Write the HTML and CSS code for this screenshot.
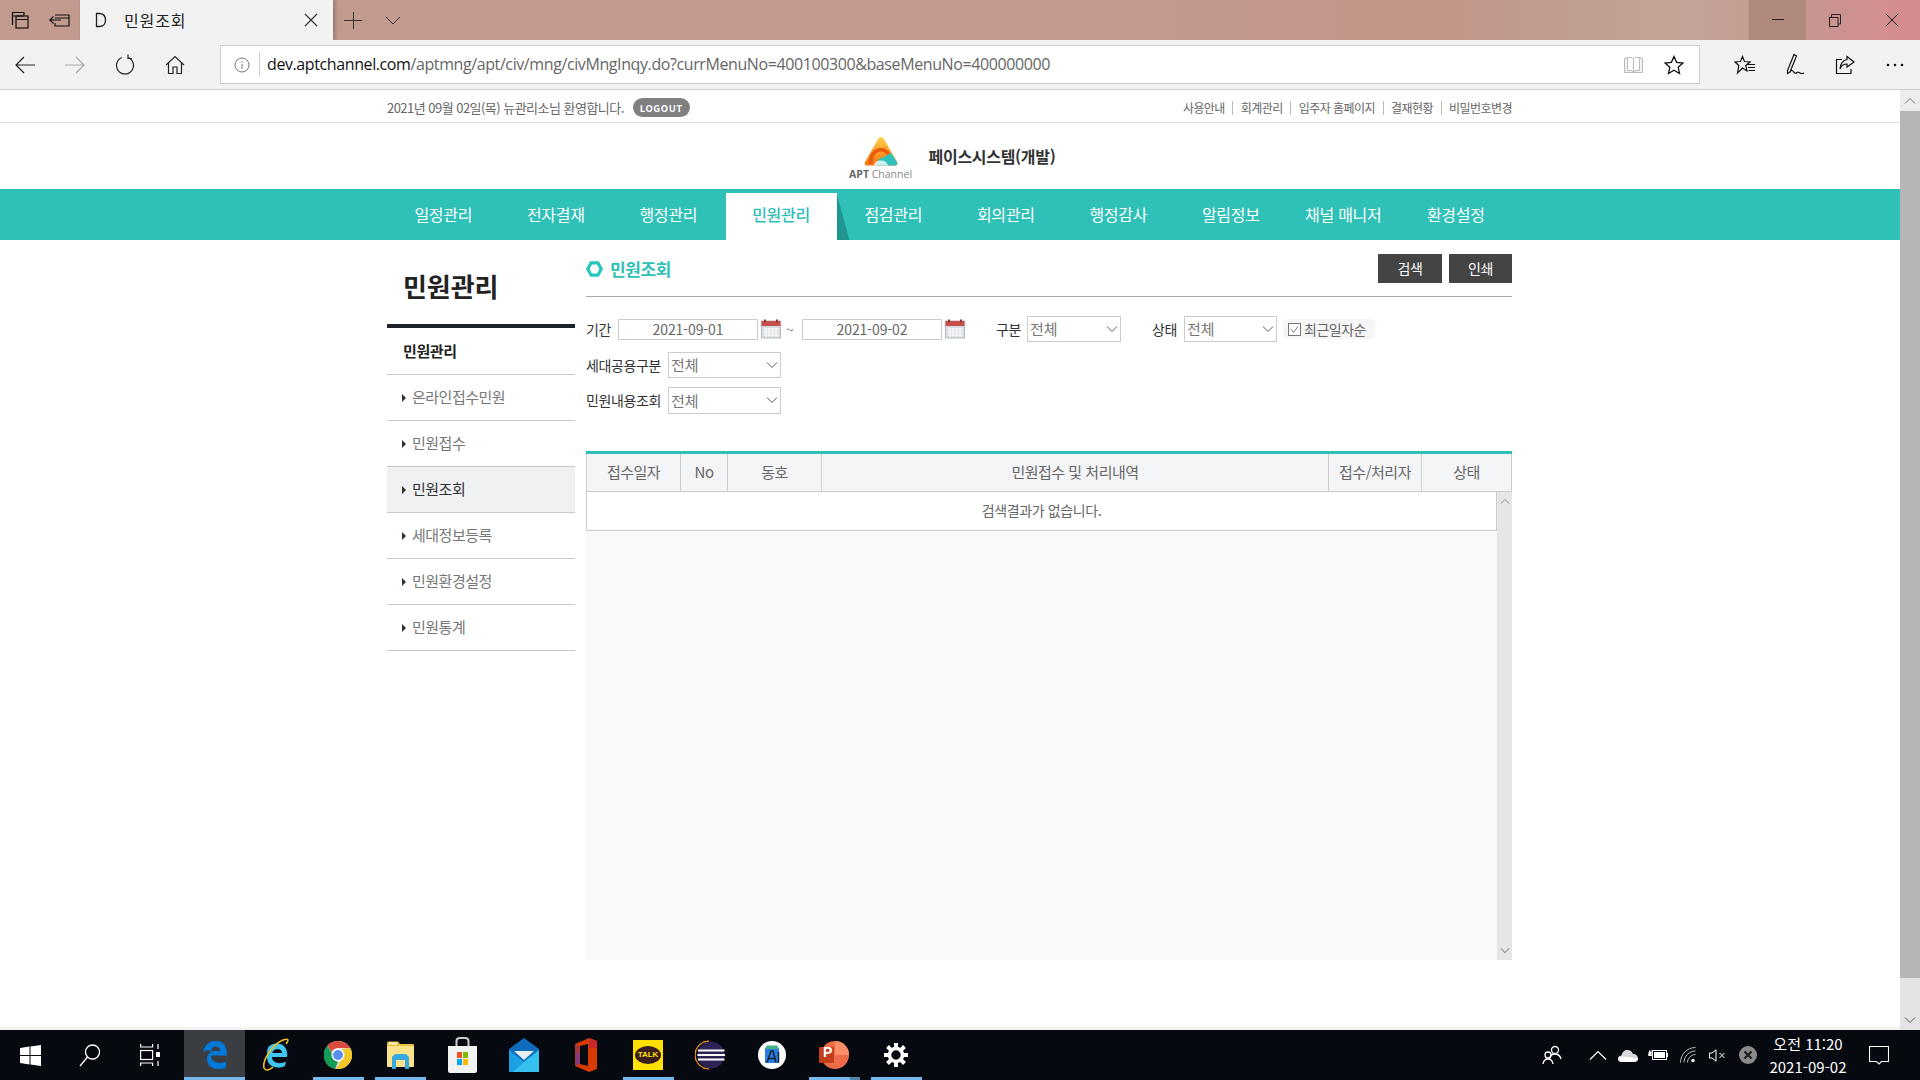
FILE: index.html
```html
<!DOCTYPE html>
<html lang="ko">
<head>
<meta charset="utf-8">
<title>민원조회</title>
<link rel="stylesheet" href="styles.css">
</head>
<body>
<svg class="sprite" aria-hidden="true">
  <symbol id="chev" viewBox="0 0 12 8"><path d="M1 1.500 6 6.500 11 1.500" fill="none" stroke="#555" stroke-width="1"/></symbol>
  <symbol id="chevup" viewBox="0 0 12 8"><path d="M1 6.500 6 1.500 11 6.500" fill="none" stroke="#777" stroke-width="1"/></symbol>
  <symbol id="cal" viewBox="0 0 20 20">
    <rect x="0.500" y="2" width="19" height="17" fill="#d7dce2" stroke="#b9bcc0"/>
    <rect x="0.500" y="2" width="19" height="5" fill="#c9504a"/>
    <rect x="3" y="0.500" width="2" height="3" fill="#8a3a36"/><rect x="15" y="0.500" width="2" height="3" fill="#8a3a36"/>
    <path d="M2 10h16M2 13h16M2 16h16M5 9v9M8 9v9M11.500 9v9M15 9v9" stroke="#fff" stroke-width="1"/>
  </symbol>
</svg>
<div class="window">
  <header class="titlebar">
    <div class="tb-btn"><svg width="20" height="20" viewBox="0 0 20 20" fill="none" stroke="#111" stroke-width="1.200"><path d="M2.500 15V2.500H14V6"/><rect x="6" y="6" width="12" height="12"/><path d="M2.500 6H14M6 9.500H18"/></svg></div>
    <div class="tb-btn"><svg width="22" height="20" viewBox="0 0 22 20" fill="none" stroke="#111" stroke-width="1.200"><path d="M6 5H20V16H6V13M1 10H12M4.500 6.500 1 10 4.500 13.500M6 8H20"/></svg></div>
    <div class="tab">
      <svg class="fav" width="14" height="18" viewBox="0 0 14 18" fill="none" stroke="#222" stroke-width="1.300"><path d="M2.500 2.500H5C9.500 2.500 11.500 5.500 11.500 9S9.500 15.500 5 15.500H2.500Z"/></svg>
      <span class="tab-title">민원조회</span>
      <svg class="tab-x" width="14" height="14" viewBox="0 0 14 14" stroke="#333" stroke-width="1.200"><path d="M1 1 13 13M13 1 1 13"/></svg>
    </div>
    <div class="tb-new"><svg width="18" height="18" viewBox="0 0 18 18" stroke="#333"><path d="M0 9.500H18M9.500 1V18"/></svg></div>
    <div class="tb-new"><svg width="16" height="9" viewBox="0 0 16 9" fill="none" stroke="#333"><path d="M1 1 8 8 15 1"/></svg></div>
    <div class="win-controls">
      <div class="wc wc-min"><svg width="12" height="2" viewBox="0 0 12 2" stroke="#222"><path d="M0 .5H12"/></svg></div>
      <div class="wc"><svg width="12" height="13" viewBox="0 0 12 13" fill="none" stroke="#222"><rect x=".5" y="3.500" width="8.500" height="9"/><path d="M2.500 3.500V.5H11.500V10H9"/></svg></div>
      <div class="wc"><svg width="14" height="14" viewBox="0 0 14 14" stroke="#222"><path d="M1 1 13 13M13 1 1 13"/></svg></div>
    </div>
  </header>

  <div class="toolbar">
    <div class="tl-btn"><svg width="20" height="18" viewBox="0 0 20 18" fill="none" stroke="#222" stroke-width="1.200"><path d="M20 9H1M9 1 1 9 9 17"/></svg></div>
    <div class="tl-btn"><svg width="20" height="18" viewBox="0 0 20 18" fill="none" stroke="#aaa" stroke-width="1.200"><path d="M0 9H19M11 1 19 9 11 17"/></svg></div>
    <div class="tl-btn"><svg width="20" height="22" viewBox="0 0 20 22" fill="none" stroke="#222" stroke-width="1.200"><path d="M7 3.500A8.500 8.500 0 1 0 13 3.500M13 0.500V4.500H17"/></svg></div>
    <div class="tl-btn"><svg width="20" height="20" viewBox="0 0 20 20" fill="none" stroke="#222" stroke-width="1.200"><path d="M1 10 10 1.500 19 10M3.500 8V18.500H8V12H12V18.500H16.500V8"/></svg></div>
    <div class="addr">
      <svg class="addr-i" width="16" height="16" viewBox="0 0 16 16" fill="none" stroke="#777"><circle cx="8" cy="8" r="7"/><path d="M8 7V12M8 4V5.500"/></svg>
      <span class="addr-div"></span>
      <span class="url"><b>dev.aptchannel.com</b>/aptmng/apt/civ/mng/civMngInqy.do?currMenuNo=400100300&amp;baseMenuNo=400000000</span>
      <svg class="addr-book" width="19" height="18" viewBox="0 0 19 18" fill="#f2f2f2" stroke="#bbb"><path d="M.5 2.500 3.500 1.500H8L9.500 3 11 1.500H15.500L18.500 2.500V16.500H.5ZM9.500 3V16.500M3.500 1.500V14.500H8L9.500 16.500 11 14.500H15.500V1.500"/></svg>
      <svg class="addr-star" width="20" height="20" viewBox="0 0 20 20" fill="none" stroke="#111" stroke-width="1.300"><path d="M10 1.500 12.600 7.300 19 8 14.200 12.300 15.500 18.500 10 15.300 4.500 18.500 5.800 12.300 1 8 7.400 7.300Z"/></svg>
    </div>
    <div class="tools">
      <div class="tool"><svg width="22" height="20" viewBox="0 0 22 20" fill="none" stroke="#111" stroke-width="1.200"><path d="M8.500 1.500 10.500 6.500 16 7 11.800 10.500 13 16 8.500 13 3.500 18 4.800 10.500 1 7 6.500 6.500ZM13 9.500H21M14 12.500H21M14.500 15.500H21"/></svg></div>
      <div class="tool"><svg width="20" height="24" viewBox="0 0 20 24" fill="none" stroke="#111" stroke-width="1.200"><path d="M9 1.500 11.500 3 5 19 2.500 20.500 2.500 17.500ZM5 19C8 14 9 23 12 19.500 14 18 15 22 19 20"/></svg></div>
      <div class="tool"><svg width="20" height="20" viewBox="0 0 20 20" fill="none" stroke="#111" stroke-width="1.200"><path d="M7 4.500H1.500V18.500H16V14M12 1.500 19 7 12 12V9C8 9 6 11 5 14 5 9 8 5 12 4.500Z"/></svg></div>
      <div class="tool"><svg width="18" height="4" viewBox="0 0 18 4" fill="#111"><circle cx="2" cy="2" r="1.300"/><circle cx="9" cy="2" r="1.300"/><circle cx="16" cy="2" r="1.300"/></svg></div>
    </div>
  </div>

  <div class="viewport">
    <div class="page-col">
      <main class="page">
        <div class="util">
          <div class="wrap util-in">
            <div class="welcome"><span>2021년 09월 02일(목) 뉴관리소님 환영합니다.</span><span class="logout">LOGOUT</span></div>
            <ul class="util-links">
              <li>사용안내</li><li>회계관리</li><li>입주자 홈페이지</li><li>결재현황</li><li>비밀번호변경</li>
            </ul>
          </div>
        </div>
        <div class="brand">
          <div class="logo">
            <svg width="34" height="31" viewBox="0 0 34 31">
              <defs><linearGradient id="lg" x1="0" y1="0" x2="0" y2="1"><stop offset="0" stop-color="#ffd24a"/><stop offset=".55" stop-color="#fb9a26"/><stop offset="1" stop-color="#f27a12"/></linearGradient></defs>
              <path d="M17 1C18.500 1 19.500 2 20.500 4L33 26C34 28 33 29.500 31 29.500H3C1 29.500 0 28 1 26L13.500 4C14.500 2 15.500 1 17 1Z" fill="url(#lg)"/>
              <path d="M5 28C4 19 9 12 17 12 21 12 24 14 26 17L23 19C21 16 19 15.500 17 15.500 11.500 15.500 8 21 9 28Z" fill="#ea5a0c"/>
              <path d="M12 29.500C12 26 15 22 20 21L27 17 33 26C34 28 33 29.500 31 29.500Z" fill="#2fc0b8"/>
              <path d="M10 29.500C10 26.500 13 24.500 17 24.500S23 26.500 24 29.500Z" fill="#fff" opacity=".75"/>
            </svg>
            <span class="logo-text"><b>APT</b> Channel</span>
          </div>
          <h1 class="brand-name">페이스시스템(개발)</h1>
        </div>
        <nav class="gnb">
          <ul class="wrap gnb-list">
            <li>일정관리</li><li>전자결재</li><li>행정관리</li><li class="on">민원관리</li><li>점검관리</li>
            <li>회의관리</li><li>행정감사</li><li>알림정보</li><li>채널 매니저</li><li>환경설정</li>
          </ul>
        </nav>
        <div class="wrap body">
          <aside class="side">
            <h2 class="side-title">민원관리</h2>
            <div class="side-head">민원관리</div>
            <ul class="side-menu">
              <li>온라인접수민원</li><li>민원접수</li><li class="on">민원조회</li><li>세대정보등록</li><li>민원환경설정</li><li>민원통계</li>
            </ul>
          </aside>
          <section class="content">
            <div class="content-head">
              <h3 class="content-title"><svg width="17" height="16" viewBox="0 0 16 15" fill="none" stroke="#25c7bd" stroke-width="3"><path d="M4.800 1.700H11.200L14.300 7.500 11.200 13.300H4.800L1.700 7.500Z"/></svg>민원조회</h3>
              <div class="btns"><button class="btn btn-a">검색</button><button class="btn btn-b">인쇄</button></div>
            </div>
            <div class="filters">
              <div class="row">
                <span class="lab lab-w">기간</span>
                <div class="date">2021-09-01</div>
                <svg class="cal" width="20" height="20"><use href="#cal"/></svg>
                <span class="tilde">~</span>
                <div class="date">2021-09-02</div>
                <svg class="cal" width="20" height="20"><use href="#cal"/></svg>
                <span class="lab lab-s lab-gap">구분</span>
                <div class="sel sel-a"><span>전체</span><svg width="12" height="8"><use href="#chev"/></svg></div>
                <span class="lab lab-w lab-gap">상태</span>
                <div class="sel sel-b"><span>전체</span><svg width="12" height="8"><use href="#chev"/></svg></div>
                <label class="check"><svg width="13" height="13" viewBox="0 0 13 13" fill="#fff" stroke="#777"><rect x=".5" y=".5" width="12" height="12"/><path d="M3 6.500 5.500 9.500 10 3.500" fill="none"/></svg>최근일자순</label>
              </div>
              <div class="row"><span class="lab lab-l">세대공용구분</span><div class="sel sel-c"><span>전체</span><svg width="12" height="8"><use href="#chev"/></svg></div></div>
              <div class="row row-t"><span class="lab lab-l">민원내용조회</span><div class="sel sel-c"><span>전체</span><svg width="12" height="8"><use href="#chev"/></svg></div></div>
            </div>
            <table class="thead">
              <colgroup><col class="c1"><col class="c2"><col class="c3"><col class="c4"><col class="c5"><col class="c6"></colgroup>
              <tr><th>접수일자</th><th>No</th><th>동호</th><th>민원접수 및 처리내역</th><th>접수/처리자</th><th>상태</th></tr>
            </table>
            <div class="tbody-wrap">
              <div class="tbody"><div class="empty">검색결과가 없습니다.</div></div>
              <div class="mini-scroll"><svg width="10" height="7"><use href="#chevup"/></svg><svg width="10" height="7"><use href="#chev"/></svg></div>
            </div>
          </section>
        </div>
      </main>
      <div class="page-strip"></div>
    </div>
    <div class="pscroll">
      <div class="ps-top"><svg width="12" height="8"><use href="#chevup"/></svg></div>
      <div class="ps-thumb"></div>
      <div class="ps-bot"><svg width="12" height="8"><use href="#chev"/></svg></div>
    </div>
  </div>

  <footer class="taskbar">
    <div class="cell cell-sys"><div class="ic"><svg width="21" height="21" viewBox="0 0 21 21" fill="#fff"><path d="M0 3 9.500 1.600V10H0ZM10.500 1.400 21 0V10H10.500ZM0 11H9.500V19.400L0 18ZM10.500 11H21V21L10.500 19.600Z"/></svg></div><i class="bar none"></i></div>
    <div class="cell cell-sys"><div class="ic"><svg width="22" height="24" viewBox="0 0 22 24" fill="none" stroke="#fff" stroke-width="1.300"><circle cx="13.500" cy="9" r="7"/><path d="M8.500 14 1 23"/></svg></div><i class="bar none"></i></div>
    <div class="cell cell-sys cell-sys-last"><div class="ic"><svg width="20" height="24" viewBox="0 0 20 24" fill="none" stroke="#fff" stroke-width="1.200"><rect x=".6" y="7.500" width="12" height="9"/><path d="M.6 1V4H12.600V1M.6 23V20H12.600V23M18 1V6M18 18V23"/><rect x="16" y="9" width="4" height="5" fill="#fff" stroke="none"/></svg></div><i class="bar none"></i></div>
    <div class="cell cell-on"><div class="ic"><svg width="26" height="30" viewBox="0 0 26 30" fill="none"><path d="M1 11.500C3 4 8 1 14 1 21 1 25.500 6 25 15.500H9C9 22 17 25 24 21.500V27.500C16 31 5 29 5 19 5 15 7.500 12.500 10 11.500 8 10 3.500 10 1 11.500ZM9.500 11H18C18 8 16 6.500 13.500 6.500 11 6.500 9.500 8.500 9.500 11Z" fill="#0078d7" fill-rule="evenodd"/></svg></div><i class="bar bar-full"></i></div>
    <div class="cell"><div class="ic"><svg width="28" height="34" viewBox="0 0 28 34" fill="none"><path d="M6 9.500C10 4 21 4 24 11 25.500 14 25.500 17 25 19H10C10 25 18 27 24 23.500L23 28C14 32 5 28 5 19 5 16 5 12 6 9.500ZM10.300 15H20C20 9.500 11.500 9.500 10.300 15Z" fill="#3fc5f0" fill-rule="evenodd"/><path d="M24 6C27 2 27 0 21 2 11 6 0 22 2 30 4 34 9 31 11 29" stroke="#eebc2a" stroke-width="1.600"/></svg></div><i class="bar none"></i></div>
    <div class="cell"><div class="ic"><svg width="28" height="32" viewBox="0 0 28 28"><circle cx="14" cy="14" r="14" fill="#ddd"/><path d="M14 0A14 14 0 0 1 26.100 7H14A7 7 0 0 0 7.700 11L3.500 4.700A14 14 0 0 1 14 0Z" fill="#db4c3f"/><path d="M3.500 4.700 9.500 15A7 7 0 0 0 14 21L11 28A14 14 0 0 1 3.500 4.700Z" fill="#159d56"/><path d="M26.100 7A14 14 0 0 1 12 27.900L19 16A7 7 0 0 0 18 8Z" fill="#f3c626"/><circle cx="14" cy="14" r="6.500" fill="#fff"/><circle cx="14" cy="14" r="5" fill="#5a8ff0"/></svg></div><i class="bar"></i></div>
    <div class="cell"><div class="ic"><svg width="27" height="28" viewBox="0 0 27 28"><path d="M0 2C0 1 1 .5 2 .5H11L13 3H26C26.500 3 27 3.500 27 4V6H0Z" fill="#e6c043"/><rect x="2" y="1.500" width="8" height="2" fill="#fff6d0"/><rect y="5" width="27" height="21" rx="1" fill="#fce38a"/><path d="M5 28V16L8 13H19L22 16V28H18V19H9V28Z" fill="#36a9e1"/></svg></div><i class="bar"></i></div>
    <div class="cell"><div class="ic"><svg width="29" height="36" viewBox="0 0 29 36"><path d="M8.500 9V4C8.500 1.500 10 1 12 1H17C19 1 20.500 1.500 20.500 4V9" fill="none" stroke="#c9c9c9" stroke-width="2"/><path d="M0 9H29V34C29 35 28 36 27 36H2C1 36 0 35 0 34Z" fill="#f2f2f2"/><rect x="9" y="15" width="5" height="6" fill="#f25022"/><rect x="15" y="15" width="5" height="6" fill="#7fba00"/><rect x="9" y="22" width="5" height="6" fill="#00a4ef"/><rect x="15" y="22" width="5" height="6" fill="#ffb900"/></svg></div><i class="bar none"></i></div>
    <div class="cell"><div class="ic"><svg width="30" height="34" viewBox="0 0 30 34"><path d="M0 11 15 0 30 11V34H0Z" fill="#0f6cbd"/><path d="M5 13H25L15 22Z" fill="#e8eef2"/><path d="M0 12 15 24 30 12V34H0Z" fill="#1ba1e2"/><path d="M15 24 30 12V34H4Z" fill="#35c0ee"/></svg></div><i class="bar none"></i></div>
    <div class="cell"><div class="ic"><svg width="24" height="34" viewBox="0 0 24 34"><path d="M1 6 15 0 23 3V31L15 34 1 28ZM6 8V26L14 28V6Z" fill="#d83b01" fill-rule="evenodd"/><path d="M1 6 6 8V26L1 28Z" fill="#a4373a"/><path d="M15 0 23 3V10H15Z" fill="#c8282c"/><path d="M2 16 6 14V26L2 27Z" fill="#8a3a7a"/></svg></div><i class="bar none"></i></div>
    <div class="cell"><div class="ic"><div class="kakao"><span>TALK</span></div></div><i class="bar"></i></div>
    <div class="cell"><div class="ic"><svg width="30" height="30" viewBox="0 0 30 30"><path d="M14 1A14 14 0 0 0 14 29 14 14 0 0 1 14 1Z" fill="#f7941e" stroke="#f7941e"/><circle cx="16" cy="15" r="13.500" fill="#2c2255"/><path d="M3 10.500H29.500M2.500 15H30M3 19.500H29.500" stroke="#fff" stroke-width="2"/></svg></div><i class="bar none"></i></div>
    <div class="cell"><div class="ic"><svg width="28" height="28" viewBox="0 0 28 28"><circle cx="14" cy="14" r="14" fill="#fff"/><path d="M7 7H21V22H7Z" fill="#2a7de1"/><path d="M9 4.500H19L21 8H7Z" fill="#3fb27f"/><path d="M9 21.500 13 10H15L18 21.500M11 17.500H16.500" fill="none" stroke="#123" stroke-width="1.500"/><path d="M20.500 11V21.500" stroke="#123" stroke-width="1.500"/></svg></div><i class="bar none"></i></div>
    <div class="cell"><div class="ic"><svg width="30" height="28" viewBox="0 0 30 28"><circle cx="16" cy="14" r="14" fill="#ed6c47"/><path d="M16 0A14 14 0 0 1 30 14H16Z" fill="#ff8f6b"/><rect y="6" width="15" height="16" rx="1" fill="#c43e1c"/></svg><span class="ppt-p">P</span></div><i class="bar bar-split"></i></div>
    <div class="cell"><div class="ic"><svg width="24" height="24" viewBox="0 0 24 24" fill="none" stroke="#fff"><circle cx="12" cy="12" r="6.500" stroke-width="3.600"/><path d="M12 0V5M12 19V24M0 12H5M19 12H24M3.500 3.500 7 7M17 17 20.500 20.500M3.500 20.500 7 17M17 7 20.500 3.500" stroke-width="4"/></svg></div><i class="bar"></i></div>

    <div class="tray">
      <div class="tr tr-people"><svg width="20" height="20" viewBox="0 0 20 20" fill="none" stroke="#fff" stroke-width="1.300"><circle cx="13" cy="5" r="3.500"/><path d="M7.500 14C8 10.500 10 9 13 9S18 10.500 19 14"/><circle cx="6" cy="10" r="3"/><path d="M1 19C1.500 15.500 3 14 6 14S10.500 15.500 11 19" stroke="#fff"/></svg></div>
      <div class="tr"><svg width="18" height="10" viewBox="0 0 18 10" fill="none" stroke="#fff" stroke-width="1.200"><path d="M1 9.500 9 1.500 17 9.500"/></svg></div>
      <div class="tr"><svg width="20" height="13" viewBox="0 0 20 13"><path d="M4 13C1.500 13 0 11.500 0 9.500S1.500 6.500 3.500 6.500C4 3 6.500 1 9.500 1 12 1 14 2.500 15 5 18 5 20 7 20 9.500S18 13 16 13Z" fill="#d9d9d9"/><path d="M0 10.500C1 8 3 7 6 7.500L20 9.500C20 11.500 18 13 16 13H4C2 13 .5 12 0 10.500Z" fill="#fff"/></svg></div>
      <div class="tr"><svg width="20" height="12" viewBox="0 0 20 12" fill="none" stroke="#fff"><rect x="4.500" y="1.500" width="14" height="9"/><rect x="6" y="3" width="11" height="6" fill="#fff" stroke="none"/><path d="M19.500 4V8M0 6H4M1.500 1.500V4M3 1.500V4" /><rect x="0.500" y="3" width="3" height="4" fill="#fff" stroke="none"/></svg></div>
      <div class="tr"><svg width="16" height="16" viewBox="0 0 16 16" fill="none" stroke="#bbb"><path d="M.5 15.500C.5 7.500 7 .5 15.500 .5M4 15.500C4 9.500 9 4 15.500 4M7.500 15.500C7.500 11.500 11 7.500 15.500 7.500"/><circle cx="13" cy="13.500" r="1.700" fill="#fff" stroke="none"/></svg></div>
      <div class="tr"><svg width="18" height="13" viewBox="0 0 18 13" fill="none" stroke="#fff"><path d="M.5 4H3L7 .8V12.200L3 9H.5ZM10.500 4 15.500 9M15.500 4 10.500 9"/></svg></div>
      <div class="tr"><svg width="18" height="18" viewBox="0 0 18 18"><circle cx="9" cy="9" r="9" fill="#8a8a8a"/><path d="M5.500 5.500 12.500 12.500M12.500 5.500 5.500 12.500" stroke="#1a1a1a" stroke-width="2"/></svg></div>
      <div class="clock"><span>오전 11:20</span><span>2021-09-02</span></div>
      <div class="notif"><svg width="20" height="19" viewBox="0 0 20 19" fill="none" stroke="#fff" stroke-width="1.100"><path d="M.5 .5H19.500V15.500H12.500L10 18 7.500 15.500H.5Z"/></svg></div>
    </div>
  </footer>
</div>
</body>
</html>
```
FILE: styles.css
```css
* { box-sizing: border-box; }
html, body { margin: 0; padding: 0; height: 100%; overflow: hidden; }
body { font-family: "Noto Sans CJK KR", "Noto Sans", sans-serif; color: #333; background: #fff; }
ul { list-style: none; margin: 0; padding: 0; }
h1, h2, h3 { margin: 0; }
.sprite { display: none; }
.window { display: flex; flex-direction: column; height: 1080px; width: 1920px; }

/* title bar */
.titlebar { height: 40px; flex: none; display: flex; align-items: stretch; background: linear-gradient(90deg, #c29a8e 0%, #c29a8e 60%, #c19687 75%, #c0a093 84%, #c3a598 87%, #c7968f 94%, #d78a91 100%); }
.tb-btn { width: 40px; display: flex; align-items: center; justify-content: center; }
.tab { width: 253px; background: #f2f2f2; display: flex; align-items: center; padding-left: 14px; box-shadow: 2px 0 4px rgba(0,0,0,.25); }
.fav { flex: none; }
.tab-title { font-size: 16px; color: #222; margin-left: 16px; letter-spacing: .9px; flex: 1; }
.tab-x { margin-right: 15px; }
.tb-new { width: 40px; display: flex; align-items: center; justify-content: center; }
.win-controls { margin-left: auto; display: flex; }
.wc { width: 57px; display: flex; align-items: center; justify-content: center; }
.wc-min { background: #b0897d; }

/* toolbar */
.toolbar { height: 50px; flex: none; display: flex; align-items: center; background: #f2f2f2; border-bottom: 1px solid #ccc; }
.tl-btn { width: 50px; display: flex; justify-content: center; }
.addr { width: 1480px; height: 39px; margin-left: 20px; background: #fff; border: 1px solid #ccc; display: flex; align-items: center; padding-left: 13px; }
.addr-div { width: 1px; height: 25px; background: #ccc; margin-left: 9px; }
.url { font-family: "Open Sans", sans-serif; font-size: 16px; color: #666; margin-left: 7px; letter-spacing: -.4px; white-space: nowrap; flex: 1; padding-bottom: 2px; }
.url b { font-weight: 400; color: #111; }
.addr-book { margin-right: 21px; }
.addr-star { margin-right: 15px; }
.tools { display: flex; margin-left: 20px; }
.tool { width: 50px; display: flex; justify-content: center; align-items: center; }

/* viewport */
.viewport { flex: 1; display: flex; min-height: 0; }
.page-col { flex: 1; display: flex; flex-direction: column; min-width: 0; }
.page { flex: 1; background: #fff; overflow: hidden; }
.page-strip { height: 3px; background: #f2f2f2; }
.pscroll { width: 20px; display: flex; flex-direction: column; background: #e4e4e4; }
.ps-top { height: 21px; background: #ececec; display: flex; align-items: center; justify-content: center; }
.ps-thumb { height: 867px; background: #b5b5b5; }
.ps-bot { flex: 1; display: flex; align-items: flex-end; justify-content: center; padding-bottom: 6px; }
.wrap { width: 1125px; margin: 0 auto 0 387px; }

/* util */
.util { height: 33px; border-bottom: 1px solid #e2e2e2; padding-top: 3px; }
.util-in { display: flex; align-items: center; justify-content: space-between; height: 100%; }
.welcome { display: flex; align-items: center; font-size: 13px; letter-spacing: -.53px; color: #666; }
.logout { width: 57px; height: 19px; margin-left: 9px; border-radius: 10px; background: #808080; color: #fff; font-size: 9.500px; font-weight: 700; letter-spacing: .6px; display: flex; align-items: center; justify-content: center; }
.util-links { display: flex; font-size: 12px; letter-spacing: -.55px; color: #666; }
.util-links li { padding: 0 7.500px; line-height: 14px; }
.util-links li + li { border-left: 1px solid #bbb; }
.util-links li:last-child { padding-right: 0; }

/* brand */
.brand { height: 66px; display: flex; align-items: center; justify-content: center; gap: 16px; padding-left: 4px; }
.logo { display: flex; flex-direction: column; align-items: center; width: 64px; padding-top: 4px; }
.logo-text { font-family: "Open Sans", sans-serif; font-size: 10.500px; line-height: 12px; color: #888; white-space: nowrap; margin-top: 1px; }
.logo-text b { color: #666; }
.brand-name { font-size: 16px; font-weight: 700; letter-spacing: -.3px; color: #333; }

/* gnb */
.gnb { height: 51px; background: #2fc0b8; }
.gnb-list { display: flex; height: 100%; }
.gnb-list li { width: 112.500px; margin-top: 4px; display: flex; align-items: center; justify-content: center; color: #fff; font-size: 16px; letter-spacing: -.3px; position: relative; padding-bottom: 6px; white-space: nowrap; }
.gnb-list li.on { width: 111px; margin-left: 1px; margin-right: .5px; background: #fff; color: #2fc0b8; font-weight: 500; }
.gnb-list li.on::after { content: ""; position: absolute; left: 100%; top: 0; width: 13px; height: 47px; background: #1f9790; clip-path: polygon(0 0, 100% 100%, 0 100%); }

/* body */
.body { display: flex; gap: 11px; }
.side { width: 188px; flex: none; }
.side-title { height: 88px; font-size: 26px; font-weight: 700; letter-spacing: -.1px; color: #222; padding: 27px 0 0 16px; line-height: 38px; border-bottom: 4px solid #1b2229; }
.side-head { height: 47px; padding: 0 0 2px 16px; font-size: 15px; font-weight: 700; letter-spacing: -.4px; color: #222; display: flex; align-items: center; border-bottom: 1px solid #c8c8c8; }
.side-menu li { height: 46px; border-bottom: 1px solid #c8c8c8; padding: 0 0 2px 25px; font-size: 15px; letter-spacing: -.5px; color: #777; display: flex; align-items: center; position: relative; }
.side-menu li::before { content: ""; position: absolute; left: 15px; top: 50%; margin-top: -4px; border-left: 4px solid #333; border-top: 4px solid transparent; border-bottom: 4px solid transparent; }
.side-menu li.on { background: #f0f1f2; color: #333; }

.content { flex: 1; min-width: 0; padding-top: 14px; }
.content-head { height: 43px; border-bottom: 1px solid #aaa; display: flex; justify-content: space-between; padding-bottom: 13px; }
.content-title { display: flex; align-items: center; gap: 7px; font-size: 17px; font-weight: 700; letter-spacing: -.4px; color: #2fc0b8; }
.btns { display: flex; gap: 7px; }
.btn { height: 29px; border: 0; padding: 0 0 2px; background: #444; color: #fff; font: 14px "Noto Sans CJK KR", sans-serif; letter-spacing: -.3px; }
.btn-a { width: 64px; }
.btn-b { width: 63px; }

.filters { padding: 19px 0 0; display: flex; flex-direction: column; gap: 10px; }
.row { height: 26px; display: flex; align-items: center; }
.lab { font-size: 14px; letter-spacing: -.4px; color: #333; white-space: nowrap; flex: none; padding-bottom: 1px; }
.lab-s { width: 31px; }
.lab-w { width: 32px; }
.lab-l { width: 82px; }
.lab-gap { margin-left: 31px; }
.date { width: 140px; height: 21px; border: 1px solid #ccc; font-size: 14px; line-height: 19px; text-align: center; color: #666; letter-spacing: -.1px; }
.cal { margin-left: 3px; flex: none; }
.tilde { width: 21px; padding-right: 3px; text-align: center; font-size: 14px; color: #777; }
.sel { height: 26px; border: 1px solid #ccc; padding: 0 2px 1px 2px; display: flex; align-items: center; justify-content: space-between; font-size: 15px; color: #777; background: #fff; }
.sel-a { width: 94px; }
.sel-b { width: 93px; }
.sel-c { width: 113px; }
.row-t { margin-top: -1px; height: 27px; }
.row-t .sel { height: 27px; }
.check { margin-left: 6px; width: 92px; height: 20px; border-radius: 5px; background: #f6f6f6; display: flex; align-items: center; gap: 3px; padding-left: 5px; font-size: 14px; letter-spacing: -.5px; color: #666; white-space: nowrap; }

.thead { width: 100%; margin-top: 37px; border-collapse: separate; border-spacing: 0; table-layout: fixed; border-top: 3px solid #2fc0b8; }
.c1 { width: 94px; } .c2 { width: 47px; } .c3 { width: 94px; } .c4 { width: 507px; } .c5 { width: 93px; } .c6 { width: 91px; }
.thead th { height: 38px; padding: 0 0 2px; background: #f4f5f7; border-left: 1px solid #ccc; border-bottom: 1px solid #ccc; font-size: 15px; font-weight: 400; letter-spacing: -.5px; color: #666; }
.thead th:last-child { border-right: 1px solid #ccc; }
.tbody-wrap { display: flex; height: 468px; }
.tbody { flex: 1; background: #f9f9f9; }
.empty { height: 39px; background: #fff; border: 1px solid #ccc; border-top: 0; padding-bottom: 2px; display: flex; align-items: center; justify-content: center; font-size: 14px; letter-spacing: -.4px; color: #666; }
.mini-scroll { width: 15px; background: #e6e6e6; display: flex; flex-direction: column; align-items: center; justify-content: space-between; padding: 6px 0; }

/* taskbar */
.taskbar { height: 50px; flex: none; background: #060a10; display: flex; }
.cell { width: 62px; flex: none; display: flex; flex-direction: column; }
.cell-sys { width: 60px; }
.cell-sys-last { margin-right: 4px; }
.cell-on { width: 61px; background: #3a3d42; }
.ic { flex: 1; display: flex; align-items: center; justify-content: center; position: relative; padding-top: 3px; }
.bar { height: 3px; margin: 0 5px 0 6px; background: #76b9ed; display: block; }
.bar.none { background: transparent; }
.bar-full { margin: 0; }
.bar-split { background: linear-gradient(90deg, #76b9ed 0 80%, #4f86ad 80% 100%); }
.kakao { width: 30px; height: 30px; background: #ffe000; display: flex; align-items: center; justify-content: center; }
.kakao span { width: 26px; height: 18px; border-radius: 50%; background: #3a1d1d; color: #ffe000; font-size: 8px; font-weight: 700; text-align: center; line-height: 18px; font-family: "Liberation Sans", sans-serif; }
.ppt-p { position: absolute; left: 20px; top: 13px; font: 700 14px/18px "Liberation Sans", sans-serif; color: #fff; }
.tray { margin-left: auto; display: flex; align-items: center; padding-right: 15px; }
.tr { width: 30px; display: flex; justify-content: center; align-items: center; }
.tr-people { width: 46px; margin-right: 8px; }
.clock { width: 90px; display: flex; flex-direction: column; align-items: center; color: #fff; font-size: 15px; line-height: 23px; }
.notif { width: 52px; display: flex; justify-content: center; padding-top: 1px; }
```
